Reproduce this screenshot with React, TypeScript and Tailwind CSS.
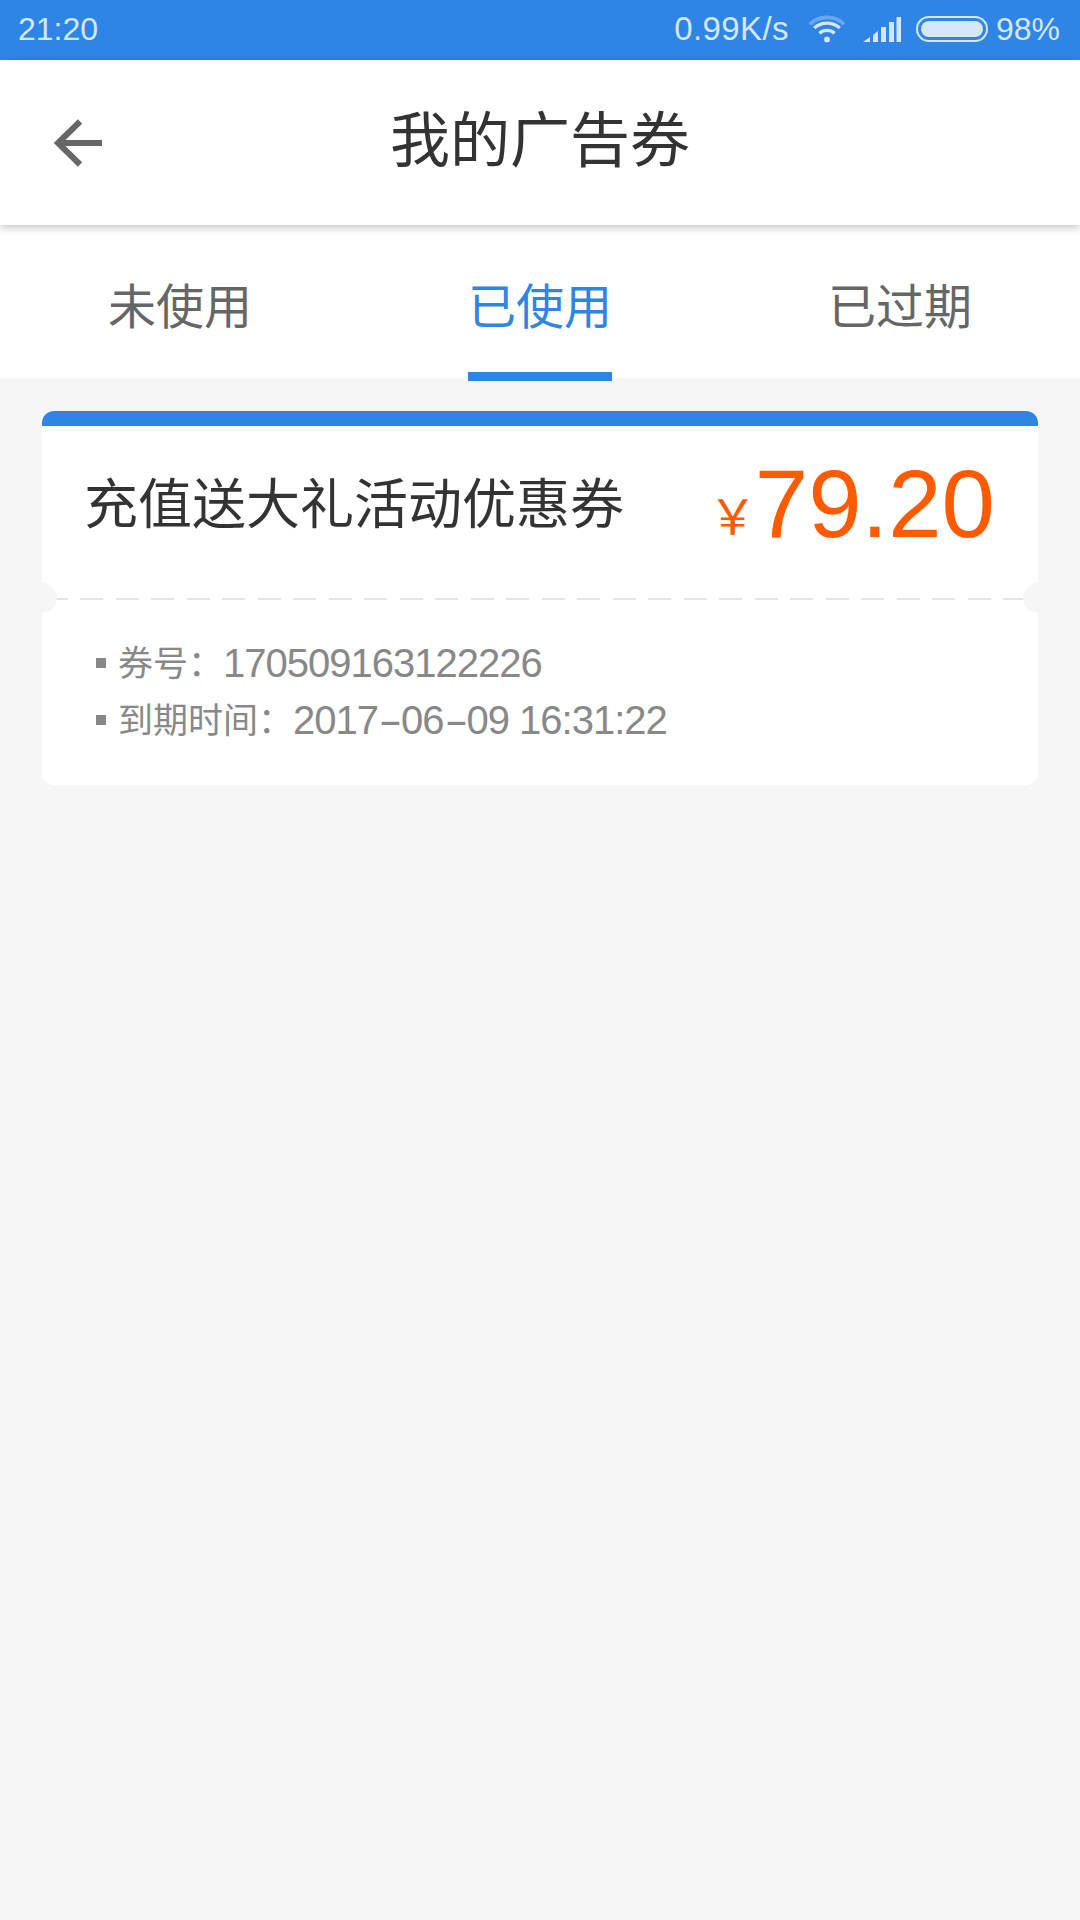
import React from 'react';

const FONT = "font-['Liberation_Sans','Noto_Sans_CJK_SC',sans-serif]";
const CJK = "font-['Noto_Sans_CJK_SC','Liberation_Sans',sans-serif]";

const tabs = [
  { label: '未使用', active: false },
  { label: '已使用', active: true },
  { label: '已过期', active: false },
];

const StatusBar: React.FC = () => (
  <div className="h-[60px] bg-[#2e85e6] flex items-center pl-[18px] pr-[20px] pb-[3px] text-[#d6e6fb]">
    <span className="text-[32px] leading-none">21:20</span>
    <div className="ml-auto flex items-center">
      <span className="text-[33px] leading-none tracking-[0.4px]">0.99K/s</span>
      <svg className="ml-[19px]" width="38" height="30" viewBox="0 0 40 30">
        <path d="M2 10 A26 26 0 0 1 38 10" fill="none" stroke="#6aa8ee" strokeWidth="4" />
        <path d="M6.5 14 A20 20 0 0 1 33.500 14" fill="none" stroke="#d6e6fb" strokeWidth="3.500" />
        <path d="M12 19.500 A12 12 0 0 1 28 19.500" fill="none" stroke="#d6e6fb" strokeWidth="3.500" />
        <circle cx="20" cy="26" r="3" fill="#d6e6fb" />
      </svg>
      <svg className="ml-[17px]" width="38" height="26" viewBox="0 0 38 26">
        <path d="M0 26 L7 21 V26 Z" fill="#d6e6fb" />
        <path d="M10 19 L15 15 V26 H10 Z" fill="#d6e6fb" />
        <rect x="18" y="11" width="5" height="15" fill="#d6e6fb" />
        <rect x="26" y="6" width="5" height="20" fill="#d6e6fb" />
        <rect x="33.500" y="1" width="4.500" height="25" fill="#d6e6fb" />
      </svg>
      <div className="ml-[15px] w-[72px] h-[26px] rounded-full border-2 border-[#d6e6fb] p-[3px]">
        <div className="h-full w-full rounded-full bg-[#d6e6fb]" />
      </div>
      <span className="ml-[8px] text-[32px] leading-none">98%</span>
    </div>
  </div>
);

const Header: React.FC = () => (
  <div className="relative z-10 h-[165px] bg-white flex items-center justify-center pb-[13px] shadow-[0_3px_8px_rgba(0,0,0,0.22)]">
    <svg className="absolute left-[54px] top-[59px]" width="48" height="48" viewBox="0 0 48 48">
      <path d="M48 24 H4 M26 2.500 L4 24 L26 45.500" fill="none" stroke="#666666" strokeWidth="6" />
    </svg>
    <h1 className={`${CJK} text-[60px] leading-none font-normal text-[#333333]`}>我的广告券</h1>
  </div>
);

const Tabs: React.FC = () => (
  <div className="h-[153px] bg-white grid grid-cols-3">
    {tabs.map((tab) => (
      <div key={tab.label} className="relative flex items-center justify-center pt-[3px]">
        <span className={`${CJK} text-[48px] leading-none ${tab.active ? 'text-[#2e85e6]' : 'text-[#666666]'}`}>{tab.label}</span>
        {tab.active && <div className="absolute left-[108px] bottom-[-3px] w-[144px] h-[9px] bg-[#2e85e6]" />}
      </div>
    ))}
  </div>
);

// the reference draws long hyphens in the date
const Value: React.FC<{ text: string }> = ({ text }) => (
  <span className="text-[40px] leading-none tracking-[-1px]">
    {text.split('-').map((part, i) => (
      <React.Fragment key={i}>
        {i > 0 && <span className="inline-block w-[23px] text-center scale-x-[1.8]">-</span>}
        {part}
      </React.Fragment>
    ))}
  </span>
);

const DetailLine: React.FC<{ label: string; value: string }> = ({ label, value }) => (
  <div className="h-[57px] flex items-center text-[#888888]">
    <div className="w-[10px] h-[10px] bg-[#888888] mr-[12px]" />
    <span className={`${CJK} text-[35px] leading-none pb-[4px]`}>{label}</span>
    <Value text={value} />
  </div>
);

const CouponCard: React.FC = () => (
  <div className="relative bg-white rounded-[12px] overflow-hidden">
    <div className="h-[15px] bg-[#2e85e6]" />
    <div className="h-[172px] flex items-center justify-between pl-[42px] pr-[43px]">
      <span className={`${CJK} text-[54px] leading-none text-[#333333] pb-[22px]`}>充值送大礼活动优惠券</span>
      <div className="flex items-baseline text-[#ff5a00] pb-[17px]">
        <span className={`${CJK} text-[48px] leading-none relative top-[-3px] mr-[-2px]`}>￥</span>
        <span className="text-[96px] leading-none">79.20</span>
      </div>
    </div>
    <div className="h-[2px] flex gap-[12.500px] pl-[2.500px] overflow-hidden">
      {Array.from({ length: 28 }).map((_, i) => (
        <div key={i} className="w-[23px] h-[2px] shrink-0 bg-[#e5e5e5]" />
      ))}
    </div>
    <div className="absolute left-[-15px] top-[172px] w-[30px] h-[30px] rounded-full bg-[#f6f6f6]" />
    <div className="absolute right-[-15px] top-[172px] w-[30px] h-[30px] rounded-full bg-[#f6f6f6]" />
    <div className="pl-[54px] pt-[34px] pb-[37px]">
      <DetailLine label="券号：" value="170509163122226" />
      <DetailLine label="到期时间：" value="2017-06-09 16:31:22" />
    </div>
  </div>
);

const App: React.FC = () => {
  return (
    <div className={`${FONT} w-[1080px] h-[1920px] bg-[#f6f6f6] flex flex-col`}>
      <StatusBar />
      <Header />
      <Tabs />
      <div className="px-[42px] pt-[33px]">
        <CouponCard />
      </div>
    </div>
  );
};

export default App;
